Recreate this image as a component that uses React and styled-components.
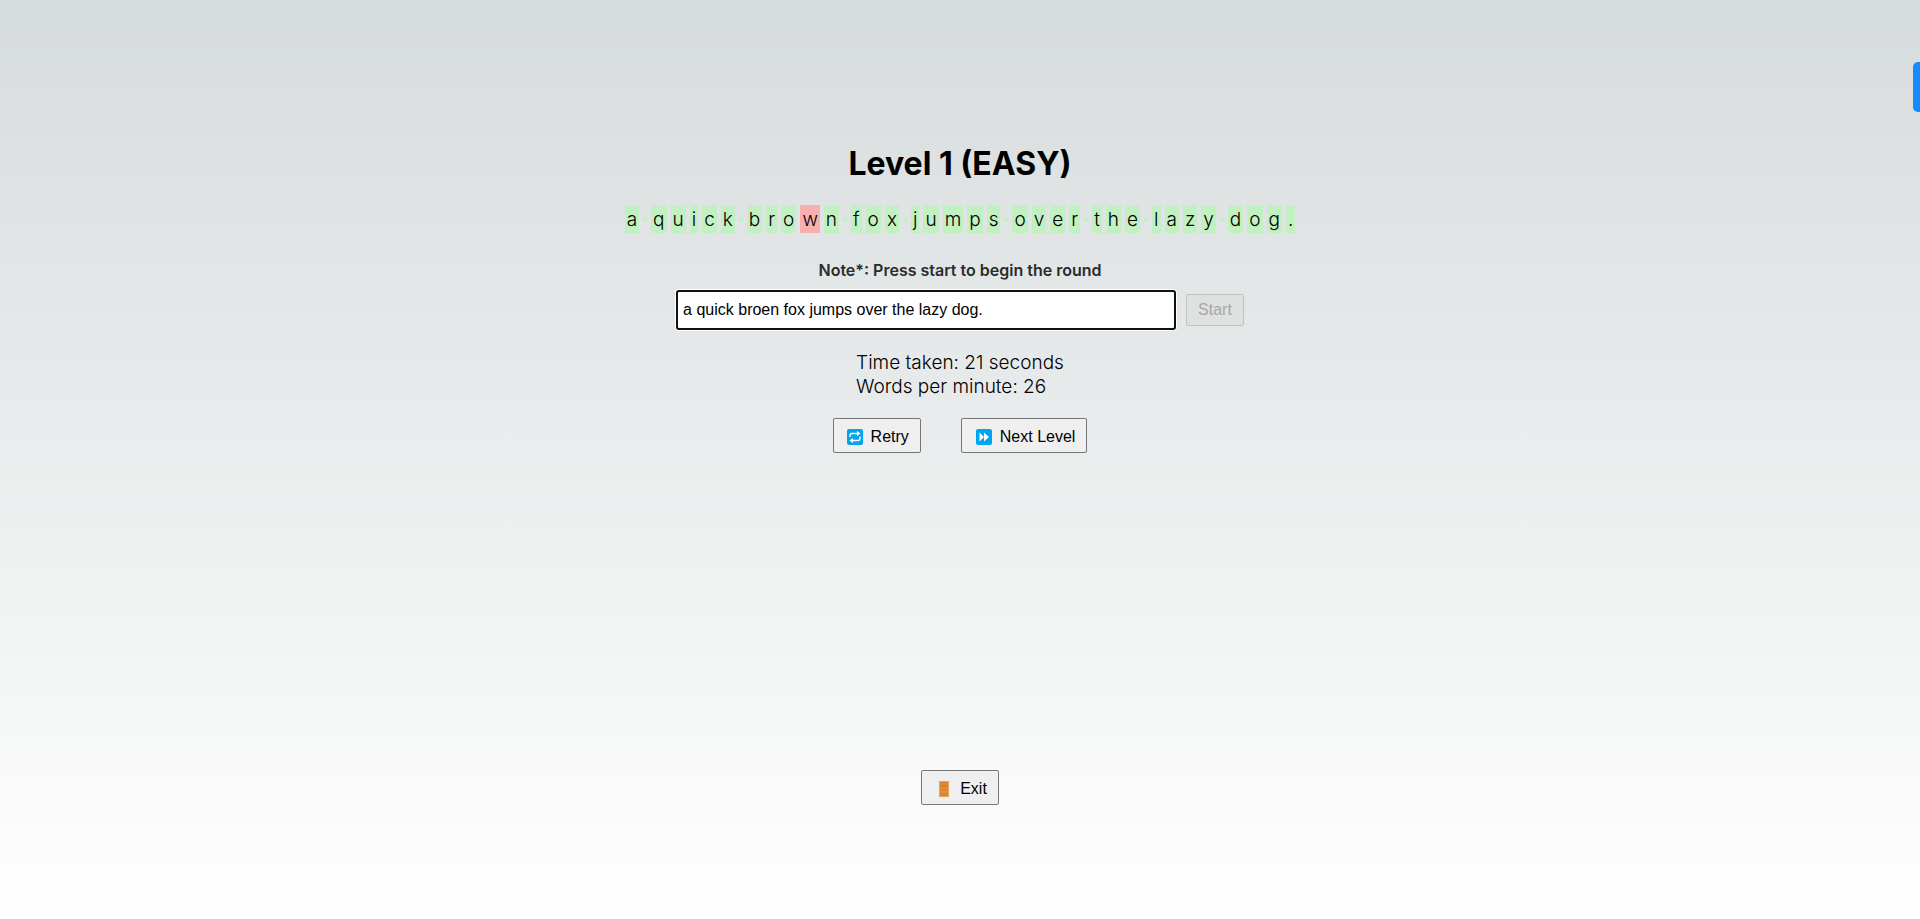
import React, { useState } from "react";
import styled, { createGlobalStyle } from "styled-components";

const GlobalStyle = createGlobalStyle`
  *, *::before, *::after { box-sizing: border-box; }
  body {
    margin: 0;
    color: #000;
    font-family: Inter, "Liberation Sans", sans-serif;
  }
`;

const Page = styled.main`
  position: relative;
  min-height: 100vh;
  display: flex;
  flex-direction: column;
  align-items: center;
  justify-content: space-between;
  padding: 144px 24px 114px;
  background: linear-gradient(to bottom, rgb(214, 219, 220), #fff);
  overflow: hidden;
`;

const Round = styled.section`
  display: flex;
  flex-direction: column;
  align-items: center;
`;

const Title = styled.h1`
  margin: 0 0 21px;
  font-size: 32px;
  line-height: 40px;
  font-weight: 700;
`;

const Sentence = styled.div`
  display: flex;
  flex-wrap: wrap;
  align-items: center;
  gap: 4px;
  margin-bottom: 28px;
`;

const Letter = styled.span`
  padding: 3px 2px 1px;
  font-size: 19px;
  line-height: 24px;
  font-weight: 300;
  background: ${({ $wrong }) => ($wrong ? "#faafaf" : "#c1f0c1")};
`;

const Note = styled.label`
  margin-bottom: 10px;
  font-size: 16px;
  line-height: 19px;
  font-weight: 600;
  color: #2b2b2b;
`;

const Entry = styled.div`
  display: flex;
  align-items: center;
  gap: 10px;
  margin-bottom: 21px;
`;

const TextBox = styled.input`
  width: 500px;
  height: 40px;
  padding: 0 5px;
  border: 2px solid #101010;
  border-radius: 3px;
  outline: none;
  box-shadow: 0 0 0 1px #fff;
  background: #fff;
  color: #000;
  font-family: "Liberation Sans", Arial, sans-serif;
  font-size: 16px;
`;

const Button = styled.button`
  display: flex;
  align-items: center;
  justify-content: center;
  gap: 7px;
  height: 35px;
  padding: 2px 11px 0 13px;
  border: 1px solid #767676;
  border-radius: 2px;
  background: #efefef;
  color: #000;
  font-family: "Liberation Sans", Arial, sans-serif;
  font-size: 16px;

  &:disabled {
    height: 32px;
    padding: 0 11px;
    border-color: #bfc2c3;
    background: #dfe1e1;
    color: #a6a8a8;
  }
`;

const Results = styled.div`
  margin-bottom: 19px;
  font-size: 19px;
  line-height: 24px;
  font-weight: 300;
`;

const Actions = styled.div`
  display: flex;
  gap: 40px;
`;

const SideTab = styled.aside`
  position: absolute;
  top: 62px;
  right: 0;
  width: 7px;
  height: 50px;
  border-radius: 5px 0 0 5px;
  background: #158bfb;
`;

const RepeatIcon = () => (
  <svg width="17" height="16" viewBox="0 0 17 16" aria-hidden="true">
    <rect width="16" height="16" rx="2" fill="#00a4ef" />
    <path
      d="M3 8V6.5Q3 4.500 5 4.500h6M13 7.500v2q0 2-2 2H5"
      fill="none"
      stroke="#fff"
      strokeWidth="1.4"
    />
    <path d="M10 2 13.500 4.500 10 7ZM6 9 2.500 11.500 6 14Z" fill="#fff" />
  </svg>
);

const ForwardIcon = () => (
  <svg width="18" height="16" viewBox="0 0 18 16" aria-hidden="true">
    <rect x="1" width="16" height="16" rx="2" fill="#00a4ef" />
    <path d="M4.500 3.500 9 8 4.500 12.500ZM9 3.500 14 8 9 12.500Z" fill="#fff" />
  </svg>
);

const DoorIcon = () => (
  <svg width="18" height="16" viewBox="0 0 18 16" aria-hidden="true">
    <rect x="4" width="10" height="16" fill="#e6a35d" />
    <path d="M5 1h8v14H5Z" fill="#d98532" />
    <path d="M5 7h8M5 11h8" stroke="#e59a4c" strokeWidth="1" />
  </svg>
);

const TARGET = "a quick brown fox jumps over the lazy dog.";

export default function App() {
  const [typed, setTyped] = useState("a quick broen fox jumps over the lazy dog.");

  return (
    <>
      <GlobalStyle />
      <Page>
        <Round>
          <Title>Level 1 (EASY)</Title>
          <Sentence>
            {TARGET.split("").map((char, i) => (
              <Letter key={i} $wrong={typed[i] !== char}>
                {char.trim()}
              </Letter>
            ))}
          </Sentence>
          <Note htmlFor="typing">Note*: Press start to begin the round</Note>
          <Entry>
            <TextBox
              id="typing"
              type="text"
              value={typed}
              onChange={(e) => setTyped(e.target.value)}
            />
            <Button type="button" disabled>
              Start
            </Button>
          </Entry>
          <Results>
            <div>Time taken: 21 seconds</div>
            <div>Words per minute: 26</div>
          </Results>
          <Actions>
            <Button type="button">
              <RepeatIcon />
              Retry
            </Button>
            <Button type="button">
              <ForwardIcon />
              Next Level
            </Button>
          </Actions>
        </Round>
        <Button type="button">
          <DoorIcon />
          Exit
        </Button>
        <SideTab />
      </Page>
    </>
  );
}
